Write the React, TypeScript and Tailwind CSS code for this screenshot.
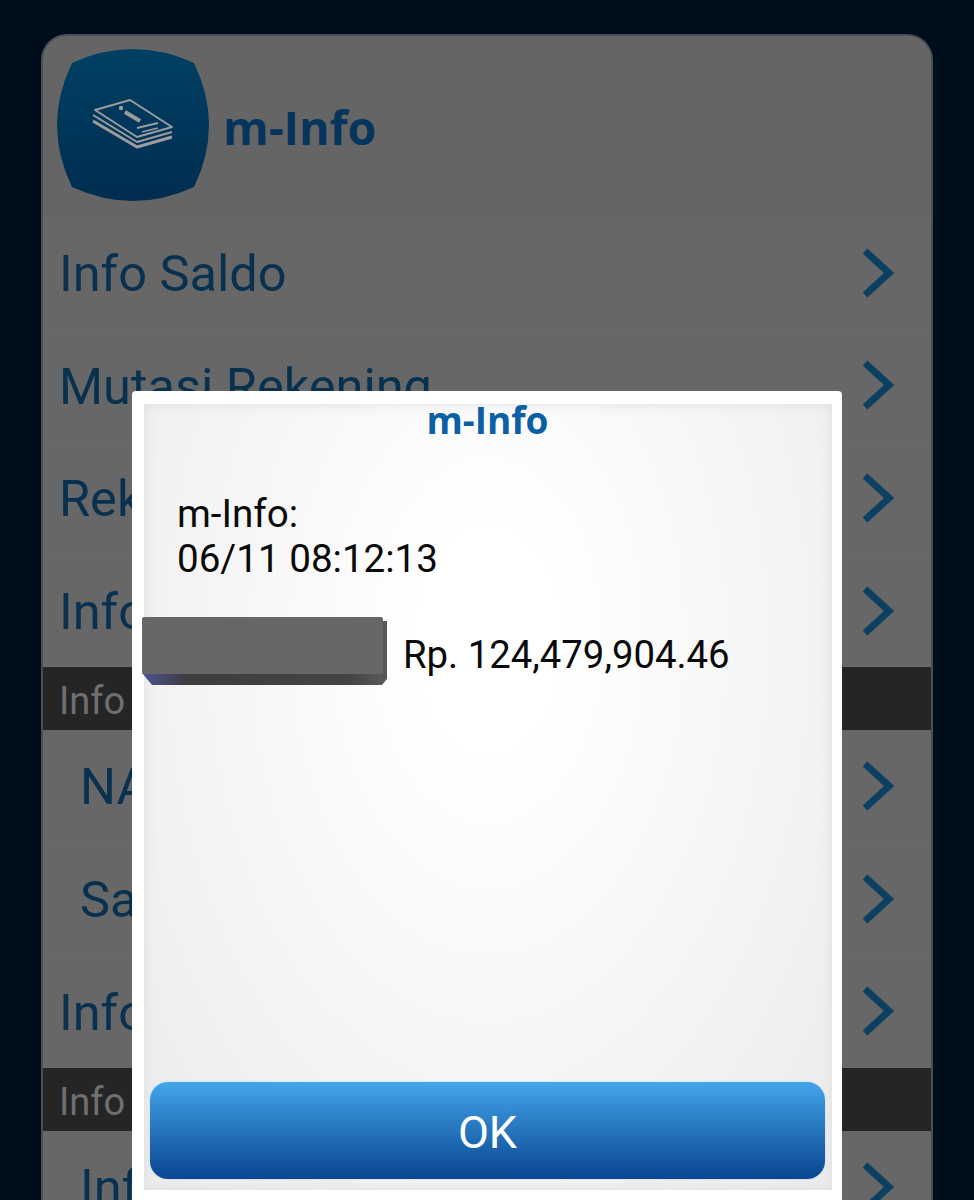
import React from 'react';

const Chevron = () => (
  <svg width="32" height="50" viewBox="0 0 32 50" fill="none" className="shrink-0">
    <path d="M3 3 L27 25 L3 47" stroke="#0b4063" strokeWidth="7" />
  </svg>
);

const Row = ({ label, indent = false }: { label: string; indent?: boolean }) => (
  <div className="flex h-[112.6px] items-center justify-between border-b border-[#6c6c6c] pr-[37px]">
    <span className={`pt-[3px] text-[50.5px] leading-none text-[#08304f] ${indent ? 'pl-[37px]' : 'pl-[16px]'}`}>{label}</span>
    <Chevron />
  </div>
);

const SectionHead = ({ label }: { label: string }) => (
  <div className="flex h-[63px] items-center bg-[#252525] pl-[16px] pt-[6px] text-[38px] text-[#6f6f6f]">{label}</div>
);

const AppIcon = () => (
  <svg width="152" height="152" viewBox="0 0 152 152" className="-mt-[3px] shrink-0">
    <defs>
      <linearGradient id="tile" x1="0" y1="0" x2="0" y2="1">
        <stop offset="0" stopColor="#004064" />
        <stop offset="1" stopColor="#002d50" />
      </linearGradient>
    </defs>
    <path d="M15 14 Q76 -14 137 14 Q167 76 137 138 Q76 166 15 138 Q-15 76 15 14 Z" fill="url(#tile)" />
    <g fill="none" stroke="#9c9c9c" strokeLinejoin="round">
      <path d="M38 61 L73 51 L115 78 L80 88 Z" strokeWidth="2" />
      <path d="M36 66 L80 93 L115 83" strokeWidth="2" />
      <path d="M36 72 L80 98 L115 88" strokeWidth="3" />
      <path d="M68 63 L83 72" strokeWidth="4" />
      <path d="M80 79 L101 74 M85 83 L101 79" strokeWidth="1.8" />
    </g>
    <circle cx="64" cy="59" r="2.2" fill="#9c9c9c" />
  </svg>
);

const Redaction = () => (
  <svg width="245" height="68" viewBox="0 0 245 68" className="shrink-0">
    <defs>
      <linearGradient id="band" x1="0" y1="0" x2="1" y2="0">
        <stop offset="0" stopColor="#4b5590" />
        <stop offset="0.18" stopColor="#3d3d40" />
        <stop offset="0.85" stopColor="#444446" />
        <stop offset="1" stopColor="#5c5c5e" />
      </linearGradient>
    </defs>
    <path d="M0 56 L245 56 L245 62 L240 68 L10 68 Z" fill="url(#band)" />
    <path d="M241 4 L245 4 L245 62 L241 62 Z" fill="#57585a" />
    <rect x="0" y="0" width="241" height="57" rx="2" fill="#676769" />
  </svg>
);

export default function App() {
  return (
    <div
      className="relative h-[1200px] w-[974px] overflow-hidden bg-[#000d1b] pl-[41px] pr-[41px] pt-[34px]"
      style={{ fontFamily: 'Roboto, sans-serif' }}
    >
      <div className="h-[1300px] rounded-t-[26px] border-2 border-b-0 border-[#4a4f55] bg-[#676767]">
        <div className="flex h-[181px] items-center gap-[14px] rounded-t-[24px] bg-[#656565] pl-[14px]">
          <AppIcon />
          <span className="pt-[2px] text-[46.5px] font-bold text-[#05345c]" style={{ fontFamily: '"Open Sans", sans-serif' }}>
            m-Info
          </span>
        </div>
        <Row label="Info Saldo" />
        <Row label="Mutasi Rekening" />
        <Row label="Rekening" />
        <Row label="Info" />
        <SectionHead label="Info" />
        <Row label="NAB" indent />
        <Row label="Saham" indent />
        <Row label="Info" />
        <SectionHead label="Info" />
        <Row label="Info" indent />
      </div>

      <div className="absolute left-[132px] top-[391px] h-[830px] w-[710px] rounded-[4px] bg-white pl-[12px] pr-[10px] pt-[13px]">
        <div
          className="flex h-[786px] flex-col pb-[11px] pl-[6px] pr-[7px] shadow-[inset_0_0_12px_#dedede]"
          style={{ background: 'radial-gradient(ellipse at 50% 30%, #ffffff 15%, #ebebeb 100%)' }}
        >
          <div
            className="h-[34px] text-center text-[37px] font-bold leading-[32px] text-[#0b5fa5]"
            style={{ fontFamily: '"Open Sans", sans-serif' }}
          >
            m-Info
          </div>
          <div className="mt-[53px] pl-[27px] text-[38.6px] leading-[45px] text-[#0a0a0a]">
            <div>m-Info:</div>
            <div>06/11 08:12:13</div>
          </div>
          <div className="-ml-[8px] mt-[36px] flex items-center gap-[16px]">
            <Redaction />
            <span className="pt-[7px] text-[38.3px] text-[#0a0a0a]">Rp. 124,479,904.46</span>
          </div>
          <div className="flex-1" />
          <div className="flex h-[97px] items-center justify-center rounded-[18px] bg-gradient-to-b from-[#44a6ea] to-[#0a4590] pt-[4px] text-[45px] text-white shadow-[0_0_2px_#a8d4f0]">
            OK
          </div>
        </div>
      </div>
    </div>
  );
}
